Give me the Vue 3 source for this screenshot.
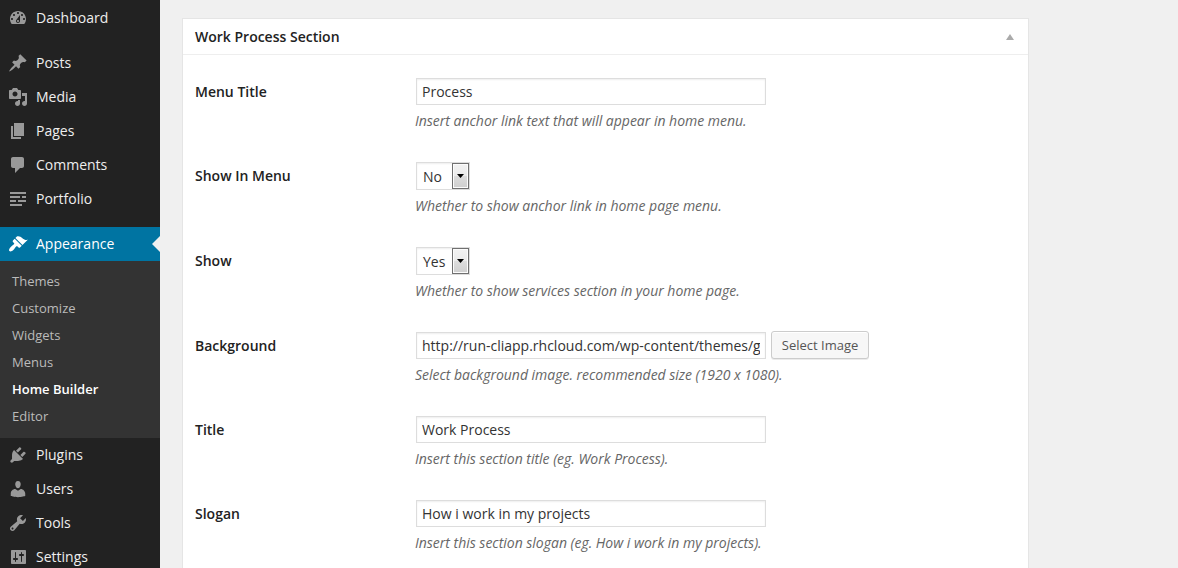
<script setup>
const icons = {
  dashboard: 'M3.76 16h12.48c1.1-1.37 1.76-3.11 1.76-5 0-4.42-3.58-8-8-8s-8 3.58-8 8c0 1.89.66 3.63 1.76 5zM10 4c.55 0 1 .45 1 1s-.45 1-1 1-1-.45-1-1 .45-1 1-1zM6 6c.55 0 1 .45 1 1s-.45 1-1 1-1-.45-1-1 .45-1 1-1zm8 0c.55 0 1 .45 1 1s-.45 1-1 1-1-.45-1-1 .45-1 1-1zm-5.37 5.55L12 7v6c0 1.1-.9 2-2 2s-2-.9-2-2c0-.57.24-1.08.63-1.45zM4 10c.55 0 1 .45 1 1s-.45 1-1 1-1-.45-1-1 .45-1 1-1zm12 0c.55 0 1 .45 1 1s-.45 1-1 1-1-.45-1-1 .45-1 1-1zm-5 3c0-.55-.45-1-1-1s-1 .45-1 1 .45 1 1 1 1-.45 1-1z',
  post: 'M10.44 3.02l1.82-1.82 6.36 6.35-1.83 1.82c-1.05-.68-2.48-.57-3.41.36l-.75.75c-.92.93-1.04 2.35-.35 3.41l-1.83 1.82-2.41-2.41-2.8 2.79c-.42.42-3.38 2.71-3.8 2.29s1.86-3.39 2.28-3.81l2.79-2.79L4.1 9.36l1.83-1.82c1.05.69 2.48.57 3.4-.36l.75-.75c.93-.92 1.05-2.35.36-3.41z',
  media: 'M13 11V4c0-.55-.45-1-1-1h-1.67L9 1H5L3.67 3H2c-.55 0-1 .45-1 1v7c0 .55.45 1 1 1h10c.55 0 1-.45 1-1zM7 4.5c1.38 0 2.5 1.12 2.5 2.5S8.38 9.5 7 9.5 4.5 8.38 4.5 7 5.62 4.5 7 4.5zM14 6h5v10.5c0 1.38-1.12 2.5-2.5 2.5S14 17.88 14 16.5s1.12-2.5 2.5-2.5c.17 0 .34.02.5.05V9h-3V6zm-4 8.05V13h2v3.5c0 1.38-1.12 2.5-2.5 2.5S7 17.88 7 16.5 8.12 14 9.5 14c.17 0 .34.02.5.05z',
  page: 'M6 15V2h10v13H6zm-1 1h8v2H3V5h2v11z',
  comments: 'M5 2h9c1.1 0 2 .9 2 2v7c0 1.1-.9 2-2 2h-2l-5 5v-5H5c-1.1 0-2-.9-2-2V4c0-1.1.9-2 2-2z',
  portfolio: 'M2 3h16v2H2zM2 7h10v2H2zM14 7h4v2h-4zM2 11h6v2H2zM10 11h8v2h-8zM2 15h12v2H2z',
  appearance: 'M14.48 11.06L7.41 3.99l1.5-1.5c.5-.56 2.3-.47 3.51.32 1.21.8 1.43 1.28 2.91 2.1 1.18.64 2.45 1.26 4.45.85zm-.71.71L6.7 4.7 4.93 6.47c-.39.39-.39 1.02 0 1.41l1.06 1.06c.39.39.39 1.03 0 1.42-.6.6-1.43 1.11-2.21 1.69-.35.26-.7.53-1.01.84C1.43 14.23.4 16.08 1.4 17.07c.99 1 2.84-.03 4.18-1.36.31-.31.58-.66.85-1.02.57-.78 1.08-1.61 1.69-2.21.39-.39 1.02-.39 1.41 0l1.06 1.06c.39.39 1.02.39 1.41 0z',
  plugins: 'M13.11 4.36L9.87 7.6 8 5.73l3.24-3.24c.35-.34 1.05-.2 1.56.32.52.51.66 1.21.31 1.55zm-8 1.77l.91-1.12 9.01 9.01-1.19.84c-.71.71-2.63 1.16-3.82 1.16H6.14L4.9 17.26c-.59.59-1.54.59-2.12 0-.59-.58-.59-1.53 0-2.12l1.24-1.24v-3.88c0-1.13.4-3.19 1.09-3.89zm7.26 3.97l3.24-3.24c.34-.35 1.04-.21 1.55.31.52.51.66 1.21.31 1.55l-3.24 3.25z',
  users: 'M10 9.25c-2.27 0-2.73-3.44-2.73-3.44C7 4.02 7.82 2 9.97 2c2.16 0 2.98 2.02 2.71 3.81 0 0-.41 3.44-2.68 3.44zm0 2.57L12.72 10c2.39 0 4.52 2.33 4.52 4.53v2.49s-3.65 1.13-7.24 1.13c-3.65 0-7.24-1.13-7.24-1.13v-2.49c0-2.25 1.94-4.48 4.47-4.48z',
  tools: 'M16.68 9.77c-1.34 1.34-3.3 1.67-4.95.99l-5.41 6.52c-.99.99-2.59.99-3.58 0s-.99-2.59 0-3.57l6.52-5.42c-.68-1.65-.35-3.61.99-4.95 1.28-1.28 3.12-1.62 4.72-1.06l-2.89 2.89 2.82 2.82 2.86-2.87c.53 1.58.18 3.39-1.08 4.65zM3.81 16.21c.4.39 1.04.39 1.43 0 .4-.4.4-1.04 0-1.43-.39-.4-1.03-.4-1.43 0-.39.39-.39 1.03 0 1.43z',
  settings: 'M18 16V4c0-.55-.45-1-1-1H4c-.55 0-1 .45-1 1v12c0 .55.45 1 1 1h13c.55 0 1-.45 1-1zM8 11h1c.55 0 1 .45 1 1s-.45 1-1 1H8v1.5c0 .28-.22.5-.5.5s-.5-.22-.5-.5V13H6c-.55 0-1-.45-1-1s.45-1 1-1h1V5.5c0-.28.22-.5.5-.5s.5.22.5.5V11zm5-2h-1c-.55 0-1-.45-1-1s.45-1 1-1h1V5.5c0-.28.22-.5.5-.5s.5.22.5.5V7h1c.55 0 1 .45 1 1s-.45 1-1 1h-1v5.5c0 .28-.22.5-.5.5s-.5-.22-.5-.5V9z',
}

const menu = [
  { label: 'Dashboard', icon: 'dashboard' },
  { label: 'Posts', icon: 'post', gap: true },
  { label: 'Media', icon: 'media' },
  { label: 'Pages', icon: 'page' },
  { label: 'Comments', icon: 'comments' },
  { label: 'Portfolio', icon: 'portfolio' },
  {
    label: 'Appearance',
    icon: 'appearance',
    gap: true,
    current: true,
    children: ['Themes', 'Customize', 'Widgets', 'Menus', 'Home Builder', 'Editor'],
  },
  { label: 'Plugins', icon: 'plugins' },
  { label: 'Users', icon: 'users' },
  { label: 'Tools', icon: 'tools' },
  { label: 'Settings', icon: 'settings' },
]

const fields = [
  { label: 'Menu Title', type: 'text', value: 'Process', help: 'Insert anchor link text that will appear in home menu.' },
  { label: 'Show In Menu', type: 'select', value: 'No', help: 'Whether to show anchor link in home page menu.' },
  { label: 'Show', type: 'select', value: 'Yes', help: 'Whether to show services section in your home page.' },
  { label: 'Background', type: 'image', value: 'http://run-cliapp.rhcloud.com/wp-content/themes/g', help: 'Select background image. recommended size (1920 x 1080).' },
  { label: 'Title', type: 'text', value: 'Work Process', help: 'Insert this section title (eg. Work Process).' },
  { label: 'Slogan', type: 'text', value: 'How i work in my projects', help: 'Insert this section slogan (eg. How i work in my projects).' },
]
</script>

<template>
  <div class="admin">
    <nav class="sidebar">
      <template v-for="item in menu" :key="item.label">
        <a class="item" :class="{ gap: item.gap, current: item.current }">
          <svg class="icon" viewBox="0 0 20 20"><path fill-rule="evenodd" :d="icons[item.icon]" /></svg>
          <span>{{ item.label }}</span>
        </a>
        <div v-if="item.children" class="submenu">
          <a v-for="c in item.children" :key="c" :class="{ active: c === 'Home Builder' }">{{ c }}</a>
        </div>
      </template>
    </nav>
    <main class="content">
      <section class="box">
        <header class="head">
          <h3>Work Process Section</h3>
          <svg class="toggle" viewBox="0 0 8 6"><path d="M4 0L8 6H0z" /></svg>
        </header>
        <div v-for="f in fields" :key="f.label" class="row" :class="f.type">
          <label>{{ f.label }}</label>
          <div class="field">
            <div class="controls">
              <div v-if="f.type === 'select'" class="select">
                <span>{{ f.value }}</span>
                <i><svg viewBox="0 0 7 4"><path d="M0 0H7L3.5 4z" /></svg></i>
              </div>
              <div v-else class="input"><span>{{ f.value }}</span></div>
              <button v-if="f.type === 'image'">Select Image</button>
            </div>
            <p>{{ f.help }}</p>
          </div>
        </div>
      </section>
    </main>
  </div>
</template>

<style>
html, body { overflow: hidden; }
</style>

<style scoped>
.admin {
  display: flex;
  width: 1178px;
  height: 568px;
  overflow: hidden;
  background: #f0f0f0;
  font-family: "Open Sans", sans-serif;
  font-size: 14px;
  color: #222;
}
.sidebar {
  flex: none;
  width: 160px;
  padding-top: 1px;
  background: #222;
}
.item {
  position: relative;
  display: flex;
  align-items: center;
  height: 34px;
  padding-left: 8px;
  gap: 8px;
  color: #eee;
}
.item span { padding-bottom: 2px; }
.item.gap { margin-top: 11px; }
.item.current { background: #0074a2; color: #fff; }
.item.current::after {
  content: "";
  position: absolute;
  right: 0;
  top: 9px;
  border: 8px solid transparent;
  border-left: 0;
  border-right-color: #f0f0f0;
}
.icon { width: 20px; height: 20px; fill: #999; }
.current .icon { fill: #fff; }
.submenu {
  display: flex;
  flex-direction: column;
  padding: 7px 12px 8px;
  background: #333;
  font-size: 13px;
  line-height: 27px;
  color: #bbb;
}
.submenu .active { color: #fff; font-weight: 600; }
.content { padding: 18px 0 0 22px; }
.box {
  box-sizing: border-box;
  width: 847px;
  height: 600px;
  border: 1px solid #e5e5e5;
  background: #fff;
}
.head {
  display: flex;
  align-items: center;
  justify-content: space-between;
  height: 35px;
  margin-bottom: 23px;
  padding: 0 14px 0 12px;
  border-bottom: 1px solid #eee;
}
h3 { margin: 0; font-size: 14px; font-weight: 600; }
.toggle { width: 8px; height: 6px; fill: #aaa; }
.row {
  display: flex;
  height: 84px;
  padding-left: 12px;
}
.row.select { height: 85px; }
.row > label { width: 220px; font-weight: 600; line-height: 27px; }
.controls { display: flex; height: 27px; padding-left: 1px; gap: 5px; }
.input {
  box-sizing: border-box;
  width: 350px;
  height: 27px;
  padding: 0 5px;
  border: 1px solid #ddd;
  box-shadow: inset 0 1px 2px rgba(0, 0, 0, 0.07);
  line-height: 25px;
  color: #333;
}
.input span { display: block; overflow: hidden; white-space: nowrap; }
.controls .select {
  box-sizing: border-box;
  display: flex;
  justify-content: space-between;
  width: 54px;
  height: 28px;
  padding-left: 6px;
  border: 1px solid #ddd;
  box-shadow: inset 0 1px 2px rgba(0, 0, 0, 0.07);
  line-height: 27px;
  color: #333;
}
.select i {
  box-sizing: border-box;
  display: flex;
  align-items: center;
  justify-content: center;
  width: 17px;
  height: 26px;
  border: 1px solid #707070;
  background: linear-gradient(#f2f2f2, #ebebeb 50%, #ddd 50%, #cfcfcf);
  box-shadow: inset 0 0 0 1px #fcfcfc;
}
.select i svg { width: 7px; height: 4px; }
button {
  box-sizing: border-box;
  width: 98px;
  height: 28px;
  margin-top: -1px;
  padding: 0;
  border: 1px solid #ccc;
  border-radius: 3px;
  background: #f7f7f7;
  box-shadow: inset 0 1px 0 #fff, 0 1px 0 rgba(0, 0, 0, 0.08);
  font: 13px "Open Sans", sans-serif;
  color: #555;
}
p {
  margin: 6px 0 0;
  font-style: italic;
  line-height: 20px;
  letter-spacing: -0.015px;
  color: #666;
}
.row.select p { margin-top: 7px; }
</style>
